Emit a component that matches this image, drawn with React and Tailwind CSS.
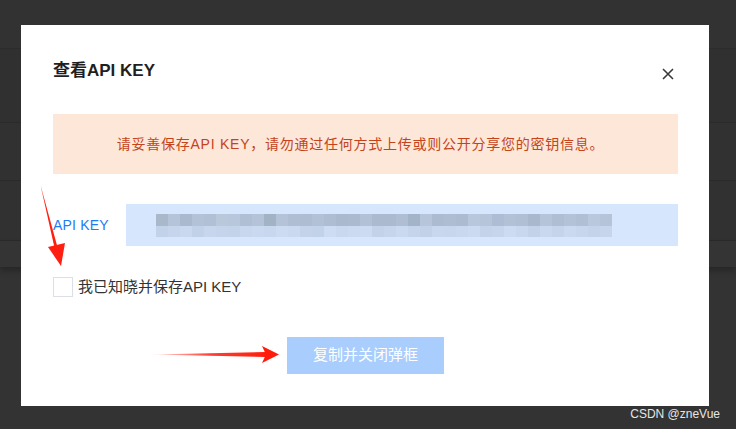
import React from "react";

const topRow = [
  "#a9b8cb", "#b5c4d8", "#aab9cd", "#b3c2d7", "#b1c0d5", "#bac8dc", "#b8c7db", "#b0bfd4",
  "#b4c3d8", "#a3b3c6", "#b4c3d8", "#afbed3", "#aebdd2", "#b2c1d6", "#aebdd2", "#aab9cd",
  "#abbacf", "#b2c1d6", "#abbacf", "#abbacf", "#afbed3", "#a4b4c8", "#b6c5da", "#acbbd0",
  "#aebdd2", "#acbbd0", "#b8c7dc", "#b6c5da", "#aebdd3", "#b2c1d6", "#b0bfd4", "#a9b8cd",
  "#b5c4d9", "#afbed3", "#b3c2d7", "#b0bfd4", "#b9c8dc", "#b5c4d8",
];

const bottomRow = [
  "#c2d2e8", "#c6d5eb", "#c9d8ee", "#c1d1e7", "#c7d6ec", "#c5d4ea", "#c3d3e9", "#c8d7ed",
  "#cad9ef", "#c8d7ed", "#ccdbf1", "#cad9ef", "#c4d3e9", "#c2d2e8", "#cddcf2", "#c9d8ee",
  "#cbdaf0", "#ccdbf1", "#c3d2e8", "#c6d5eb", "#cad9ef", "#c5d4ea", "#c2d1e7", "#c8d7ed",
  "#c7d6ec", "#c9d8ee", "#cbdaf0", "#c4d3e9", "#c6d5eb", "#ccdbf1", "#c8d7ed", "#c3d2e8",
  "#c9d8ee", "#c5d4ea", "#cad9ef", "#c7d6ec", "#c4d3e9", "#c6d5eb",
];

const font = { fontFamily: '"Liberation Sans", "Noto Sans CJK SC", sans-serif' };

const BlurredKey = () => (
  <div className="flex flex-col">
    <div className="flex">
      {topRow.map((c, i) => (
        <div key={i} className="w-[12px] h-[12px]" style={{ backgroundColor: c }} />
      ))}
    </div>
    <div className="flex">
      {bottomRow.map((c, i) => (
        <div key={i} className="w-[12px] h-[11px]" style={{ backgroundColor: c }} />
      ))}
    </div>
  </div>
);

const App = () => {
  return (
    <div className="relative w-[736px] h-[429px] overflow-hidden bg-[#333333]" style={font}>
      {/* page behind the overlay */}
      <div className="flex flex-col">
        <div className="h-[49px] bg-[#323232] border-b border-[#2c2c2c]" />
        <div className="h-[74px] bg-[#303030] border-b border-[#2a2a2a]" />
        <div className="h-[58px] bg-[#313131] border-b border-[#2a2a2a]" />
        <div className="h-[60px] bg-[#313131] border-b border-[#2a2a2a]" />
        <div className="h-[26px] bg-[#343434] shadow-[0_4px_6px_rgba(0,0,0,0.25)]" />
      </div>

      {/* modal */}
      <div className="absolute left-[21px] top-[25px] w-[688px] h-[381px] bg-white pl-[32px] pr-[31px] pt-[34px]">
        <div className="flex items-center justify-between h-[24px]">
          <h2 className="text-[17px] font-bold text-[#1f1f1f] leading-[24px]">查看API KEY</h2>
          <svg className="mr-[4px] mt-[6px]" width="12" height="12" viewBox="0 0 12 12" fill="none">
            <path d="M1 1L11 11M11 1L1 11" stroke="#3a3a3a" strokeWidth="1.6" />
          </svg>
        </div>

        <div className="mt-[31px] h-[60px] bg-[#fde7d8] flex items-center justify-center">
          <p className="text-[14px] text-[#c4431b] tracking-[0.75px] pr-[10px]">
            请妥善保存API KEY，请勿通过任何方式上传或则公开分享您的密钥信息。
          </p>
        </div>

        <div className="mt-[30px] flex items-center h-[42px]">
          <span className="w-[73px] text-[14px] text-[#1e7bf4] tracking-[0.2px]">API KEY</span>
          <div className="flex-1 h-[42px] bg-[#d5e6fd] pl-[30px] flex items-center">
            <BlurredKey />
          </div>
        </div>

        <label className="mt-[31px] flex items-center gap-[5px] h-[20px]">
          <span className="w-[20px] h-[20px] border border-[#dcdfe6] bg-white" />
          <span className="text-[15px] text-[#333333]">我已知晓并保存API KEY</span>
        </label>

        <div className="mt-[40px] flex justify-center">
          <button className="w-[157px] h-[37px] bg-[#a9cdfc] text-white text-[15px]">复制并关闭弹框</button>
        </div>
      </div>

      {/* annotation arrows */}
      <svg className="absolute left-0 top-0 pointer-events-none" width="736" height="429" viewBox="0 0 736 429">
        <defs>
          <linearGradient id="hfade" x1="151" y1="0" x2="270" y2="0" gradientUnits="userSpaceOnUse">
            <stop offset="0" stopColor="#ff2a1a" stopOpacity="0.1" />
            <stop offset="0.5" stopColor="#ff2a1a" stopOpacity="0.9" />
            <stop offset="1" stopColor="#ff1a0a" />
          </linearGradient>
        </defs>
        <path d="M40.5 185 L55 250 L58 249 Z" fill="#ff1f10" />
        <path d="M48 247 L65 243 L61 266 Z" fill="#ff1f10" />
        <path d="M151 354.5 L266 352 L266 357 Z" fill="url(#hfade)" />
        <path d="M262 346 L279 354.5 L262 363 L266 354.5 Z" fill="#ff1a0a" />
      </svg>

      <div className="absolute right-[16px] bottom-[6px] text-[12px] text-[#e6e6e6]">CSDN @zneVue</div>
    </div>
  );
};

export default App;
